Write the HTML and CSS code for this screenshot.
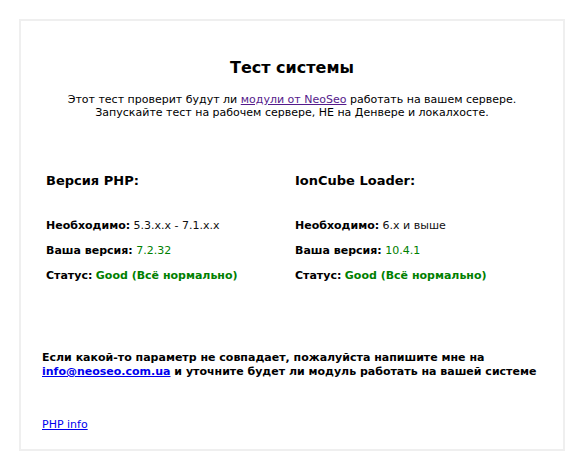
FILE: index.html
```html
<!DOCTYPE html>
<html lang="ru">
<head>
<meta charset="utf-8">
<title>Тест системы</title>
<link rel="stylesheet" href="styles.css">
</head>
<body>
<div class="box">
  <h1 class="title">Тест системы</h1>
  <p class="intro">Этот тест проверит будут ли <a class="visited" href="#">модули от NeoSeo</a> работать на вашем сервере.<br>Запускайте тест на рабочем сервере, НЕ на Денвере и локалхосте.</p>
  <div class="cols">
    <div class="col">
      <h3 class="col-title">Версия PHP:</h3>
      <div class="row"><b>Необходимо:</b> 5.3.x.x - 7.1.x.x</div>
      <div class="row"><b>Ваша версия:</b> <span class="ok">7.2.32</span></div>
      <div class="row"><b>Статус:</b> <b class="ok">Good (Всё нормально)</b></div>
    </div>
    <div class="col">
      <h3 class="col-title">IonCube Loader:</h3>
      <div class="row"><b>Необходимо:</b> 6.x и выше</div>
      <div class="row"><b>Ваша версия:</b> <span class="ok">10.4.1</span></div>
      <div class="row"><b>Статус:</b> <b class="ok">Good (Всё нормально)</b></div>
    </div>
  </div>
  <p class="note">Если какой-то параметр не совпадает, пожалуйста напишите мне на<br><a class="link" href="#">info@neoseo.com.ua</a> и уточните будет ли модуль работать на вашей системе</p>
  <p class="info"><a class="link" href="#">PHP info</a></p>
</div>
</body>
</html>
```
FILE: styles.css
```css
html, body {
  margin: 0;
  padding: 0;
  background: #fff;
}
body {
  padding: 19px 0 0 19px;
  font-family: "DejaVu Sans", Verdana, sans-serif;
  font-size: 11px;
  color: #000;
}
.box {
  box-sizing: border-box;
  width: 546px;
  height: 432px;
  border: 2px solid #efefef;
  padding: 37px 21px 0 21px;
}
.title {
  margin: 0;
  text-align: center;
  font-size: 16px;
  font-weight: bold;
  line-height: 19px;
}
.intro {
  margin: 16px 0 0;
  text-align: center;
  line-height: 13px;
  color: #000;
}
.visited {
  color: #551a8b;
}
.link {
  color: #0000ee;
}
.cols {
  display: grid;
  grid-template-columns: 249px 249px;
  margin-top: 54px;
}
.col {
  padding-left: 4px;
}
.col-title {
  margin: 0 0 30px;
  font-size: 13px;
  line-height: 16px;
  font-weight: bold;
}
.row {
  line-height: 13px;
  margin-bottom: 12px;
  color: #111;
}
.row b {
  color: #000;
}
.ok, .row b.ok {
  color: #008000;
}
.note {
  margin: 57px 0 0;
  font-weight: bold;
  line-height: 14px;
}
.info {
  margin: 39px 0 0;
  line-height: 13px;
}
```
